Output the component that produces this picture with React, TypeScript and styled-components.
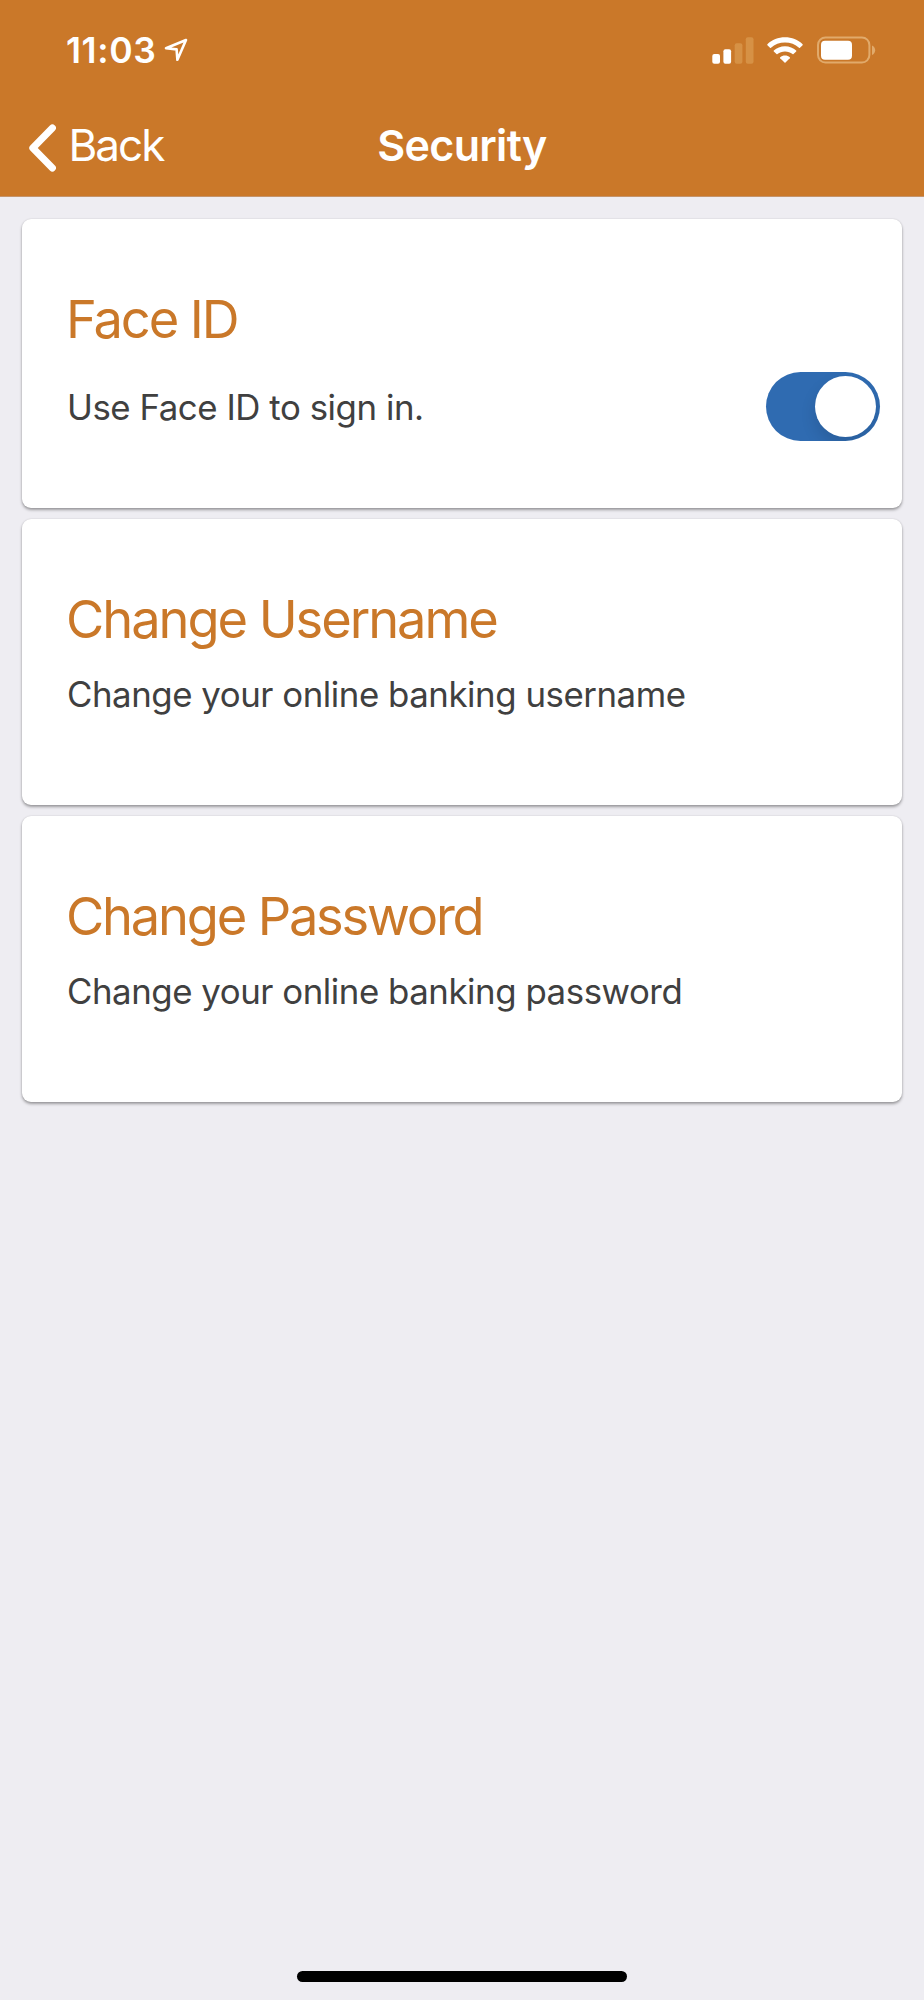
import React, { useState } from "react";
import styled, { createGlobalStyle } from "styled-components";

const GlobalStyle = createGlobalStyle`
  * { box-sizing: border-box; }
  body {
    margin: 0;
    background: #eeedf2;
    font-family: Inter, "Liberation Sans", sans-serif;
    -webkit-font-smoothing: antialiased;
  }
  h1, h2, p { margin: 0; font-weight: 400; }
`;

const Screen = styled.div`
  display: flex;
  flex-direction: column;
  width: 924px;
  height: 2000px;
  background: #eeedf2;
`;

const Header = styled.header`
  height: 197px;
  background: #ca7829;
  border-bottom: 1px solid #c5946b;
  color: #fff;
`;

const StatusBar = styled.div`
  display: flex;
  justify-content: space-between;
  height: 96px;
  padding: 29px 48px 0 66px;
`;

const StatusGroup = styled.div<{ $gap: number }>`
  display: flex;
  align-items: center;
  gap: ${(p) => p.$gap}px;
  height: 42px;
`;

const Clock = styled.span`
  padding-top: 2px;
  font-size: 35.5px;
  line-height: 42px;
  font-weight: 600;
  letter-spacing: 0.6px;
`;

const NavBar = styled.nav`
  display: grid;
  grid-template-columns: 1fr auto 1fr;
  align-items: center;
  height: 98px;
  padding: 0 28px;
`;

const BackButton = styled.button`
  display: flex;
  align-items: center;
  gap: 12.5px;
  padding: 0;
  border: 0;
  background: none;
  color: inherit;
  font: inherit;
`;

const ChevronSlot = styled.span`
  display: flex;
  padding-top: 5px;
`;

const BackLabel = styled.span`
  font-size: 44px;
  line-height: 54px;
  letter-spacing: -2px;
`;

const NavTitle = styled.h1`
  font-size: 43px;
  line-height: 54px;
  font-weight: 600;
  letter-spacing: -0.7px;
`;

const CardList = styled.main`
  display: flex;
  flex: 1;
  flex-direction: column;
  gap: 11px;
  padding: 22px 22px 0;
`;

const Card = styled.section<{ $height: number }>`
  display: flex;
  flex-direction: column;
  height: ${(p) => p.$height}px;
  padding: 68px 22px 0 45px;
  border-radius: 9px;
  background: #fff;
  box-shadow: 0 2px 3px rgba(0, 0, 0, 0.34), 0 0 2px rgba(0, 0, 0, 0.12);
`;

const CardTitle = styled.h2<{ $tracking: number }>`
  margin-left: -1px;
  color: #ca7829;
  font-size: 52.4px;
  line-height: 64px;
  letter-spacing: ${(p) => p.$tracking}px;
`;

const CardRow = styled.div<{ $top: number }>`
  display: flex;
  align-items: center;
  justify-content: space-between;
  margin-top: ${(p) => p.$top}px;
`;

const CardText = styled.p`
  color: #404040;
  font-size: 34.8px;
  line-height: 42px;
  letter-spacing: -0.45px;
`;

const Track = styled.button<{ $on: boolean }>`
  display: flex;
  align-items: center;
  justify-content: ${(p) => (p.$on ? "flex-end" : "flex-start")};
  width: 114px;
  height: 69px;
  padding: 0 4px;
  border: 0;
  border-radius: 35px;
  background: ${(p) => (p.$on ? "#2f6bb1" : "#d9d9de")};
  overflow: hidden;
`;

const Thumb = styled.span`
  width: 61px;
  height: 61px;
  border-radius: 50%;
  background: #fff;
  box-shadow: 0 8px 16px rgba(0, 0, 0, 0.12);
`;

const HomeArea = styled.footer`
  display: flex;
  justify-content: center;
  height: 29px;
`;

const HomeIndicator = styled.div`
  width: 330px;
  height: 11px;
  border-radius: 6px;
  background: #000;
`;

const LocationIcon = () => (
  <svg width="24" height="24" viewBox="0 0 24 24" fill="none">
    <path d="M22 2 L2 10.3 L12.6 11.4 L13.4 21.8 Z" stroke="#fff" strokeWidth="2.6" strokeLinejoin="round" />
  </svg>
);

const SignalIcon = () => (
  <svg width="42" height="27" viewBox="0 0 42 27" fill="#fff">
    <rect x="0.3" y="17" width="7.7" height="9.8" rx="2" />
    <rect x="11.4" y="12.3" width="7.7" height="14.5" rx="2" />
    <rect x="22.7" y="6.3" width="7.7" height="20.5" rx="2" fill="#d69145" />
    <rect x="33.8" y="0.3" width="7.7" height="26.5" rx="2" fill="#d69145" />
  </svg>
);

const WifiIcon = () => (
  <svg width="36" height="27" viewBox="0 0 36 27" fill="#fff">
    <path d="M18 0.3 C11.2 0.3 5 2.9 0.4 7.2 Q0 7.7 0.4 8.2 L3 10.8 Q3.5 11.2 4 10.8 C7.7 7.4 12.6 5.5 18 5.5 S28.3 7.4 32 10.8 Q32.5 11.2 33 10.8 L35.6 8.2 Q36 7.7 35.6 7.2 C31 2.9 24.8 0.3 18 0.3 Z" />
    <path d="M18 9.2 C13.7 9.2 9.8 10.8 6.8 13.5 Q6.4 14 6.8 14.5 L9.5 17.1 Q10 17.5 10.5 17.1 C12.5 15.4 15.1 14.4 18 14.4 S23.5 15.4 25.5 17.1 Q26 17.5 26.5 17.1 L29.2 14.5 Q29.6 14 29.2 13.5 C26.2 10.8 22.3 9.2 18 9.2 Z" />
    <path d="M18 18.6 C16.1 18.6 14.5 19.2 13.2 20.2 Q12.8 20.7 13.2 21.2 L17.5 25.6 Q18 26.1 18.5 25.6 L22.8 21.2 Q23.2 20.7 22.8 20.2 C21.5 19.2 19.9 18.6 18 18.6 Z" />
  </svg>
);

const BatteryIcon = () => (
  <svg width="60" height="28" viewBox="0 0 60 28" fill="none">
    <rect x="2" y="1.4" width="51.4" height="25.2" rx="7.5" stroke="#e1aa6b" strokeWidth="2" />
    <rect x="5" y="4.7" width="31" height="19" rx="4" fill="#fff" />
    <path d="M56 9.4 C60.2 11 60.2 17.4 56 19 Z" fill="#e1aa6b" />
  </svg>
);

const ChevronIcon = () => (
  <svg width="28" height="48" viewBox="0 0 28 48" fill="none">
    <path d="M24.4 4 L4.8 24 L24.4 44" stroke="#fff" strokeWidth="7" strokeLinecap="round" strokeLinejoin="round" />
  </svg>
);

interface SettingProps {
  title: string;
  text: string;
  height: number;
  rowTop: number;
  tracking: number;
  children?: React.ReactNode;
}

const Setting = ({ title, text, height, rowTop, tracking, children }: SettingProps) => (
  <Card $height={height}>
    <CardTitle $tracking={tracking}>{title}</CardTitle>
    <CardRow $top={rowTop}>
      <CardText>{text}</CardText>
      {children}
    </CardRow>
  </Card>
);

export default function App() {
  const [faceId, setFaceId] = useState(true);
  return (
    <Screen>
      <GlobalStyle />
      <Header>
        <StatusBar>
          <StatusGroup $gap={8}>
            <Clock>11:03</Clock>
            <LocationIcon />
          </StatusGroup>
          <StatusGroup $gap={13}>
            <SignalIcon />
            <WifiIcon />
            <BatteryIcon />
          </StatusGroup>
        </StatusBar>
        <NavBar>
          <BackButton>
            <ChevronSlot>
              <ChevronIcon />
            </ChevronSlot>
            <BackLabel>Back</BackLabel>
          </BackButton>
          <NavTitle>Security</NavTitle>
        </NavBar>
      </Header>
      <CardList>
        <Setting title="Face ID" text="Use Face ID to sign in." height={289} rowTop={21} tracking={-2.1}>
          <Track $on={faceId} role="switch" aria-checked={faceId} onClick={() => setFaceId(!faceId)}>
            <Thumb />
          </Track>
        </Setting>
        <Setting title="Change Username" text="Change your online banking username" height={286} rowTop={22} tracking={-2.05} />
        <Setting title="Change Password" text="Change your online banking password" height={286} rowTop={22} tracking={-2.2} />
      </CardList>
      <HomeArea>
        <HomeIndicator />
      </HomeArea>
    </Screen>
  );
}
